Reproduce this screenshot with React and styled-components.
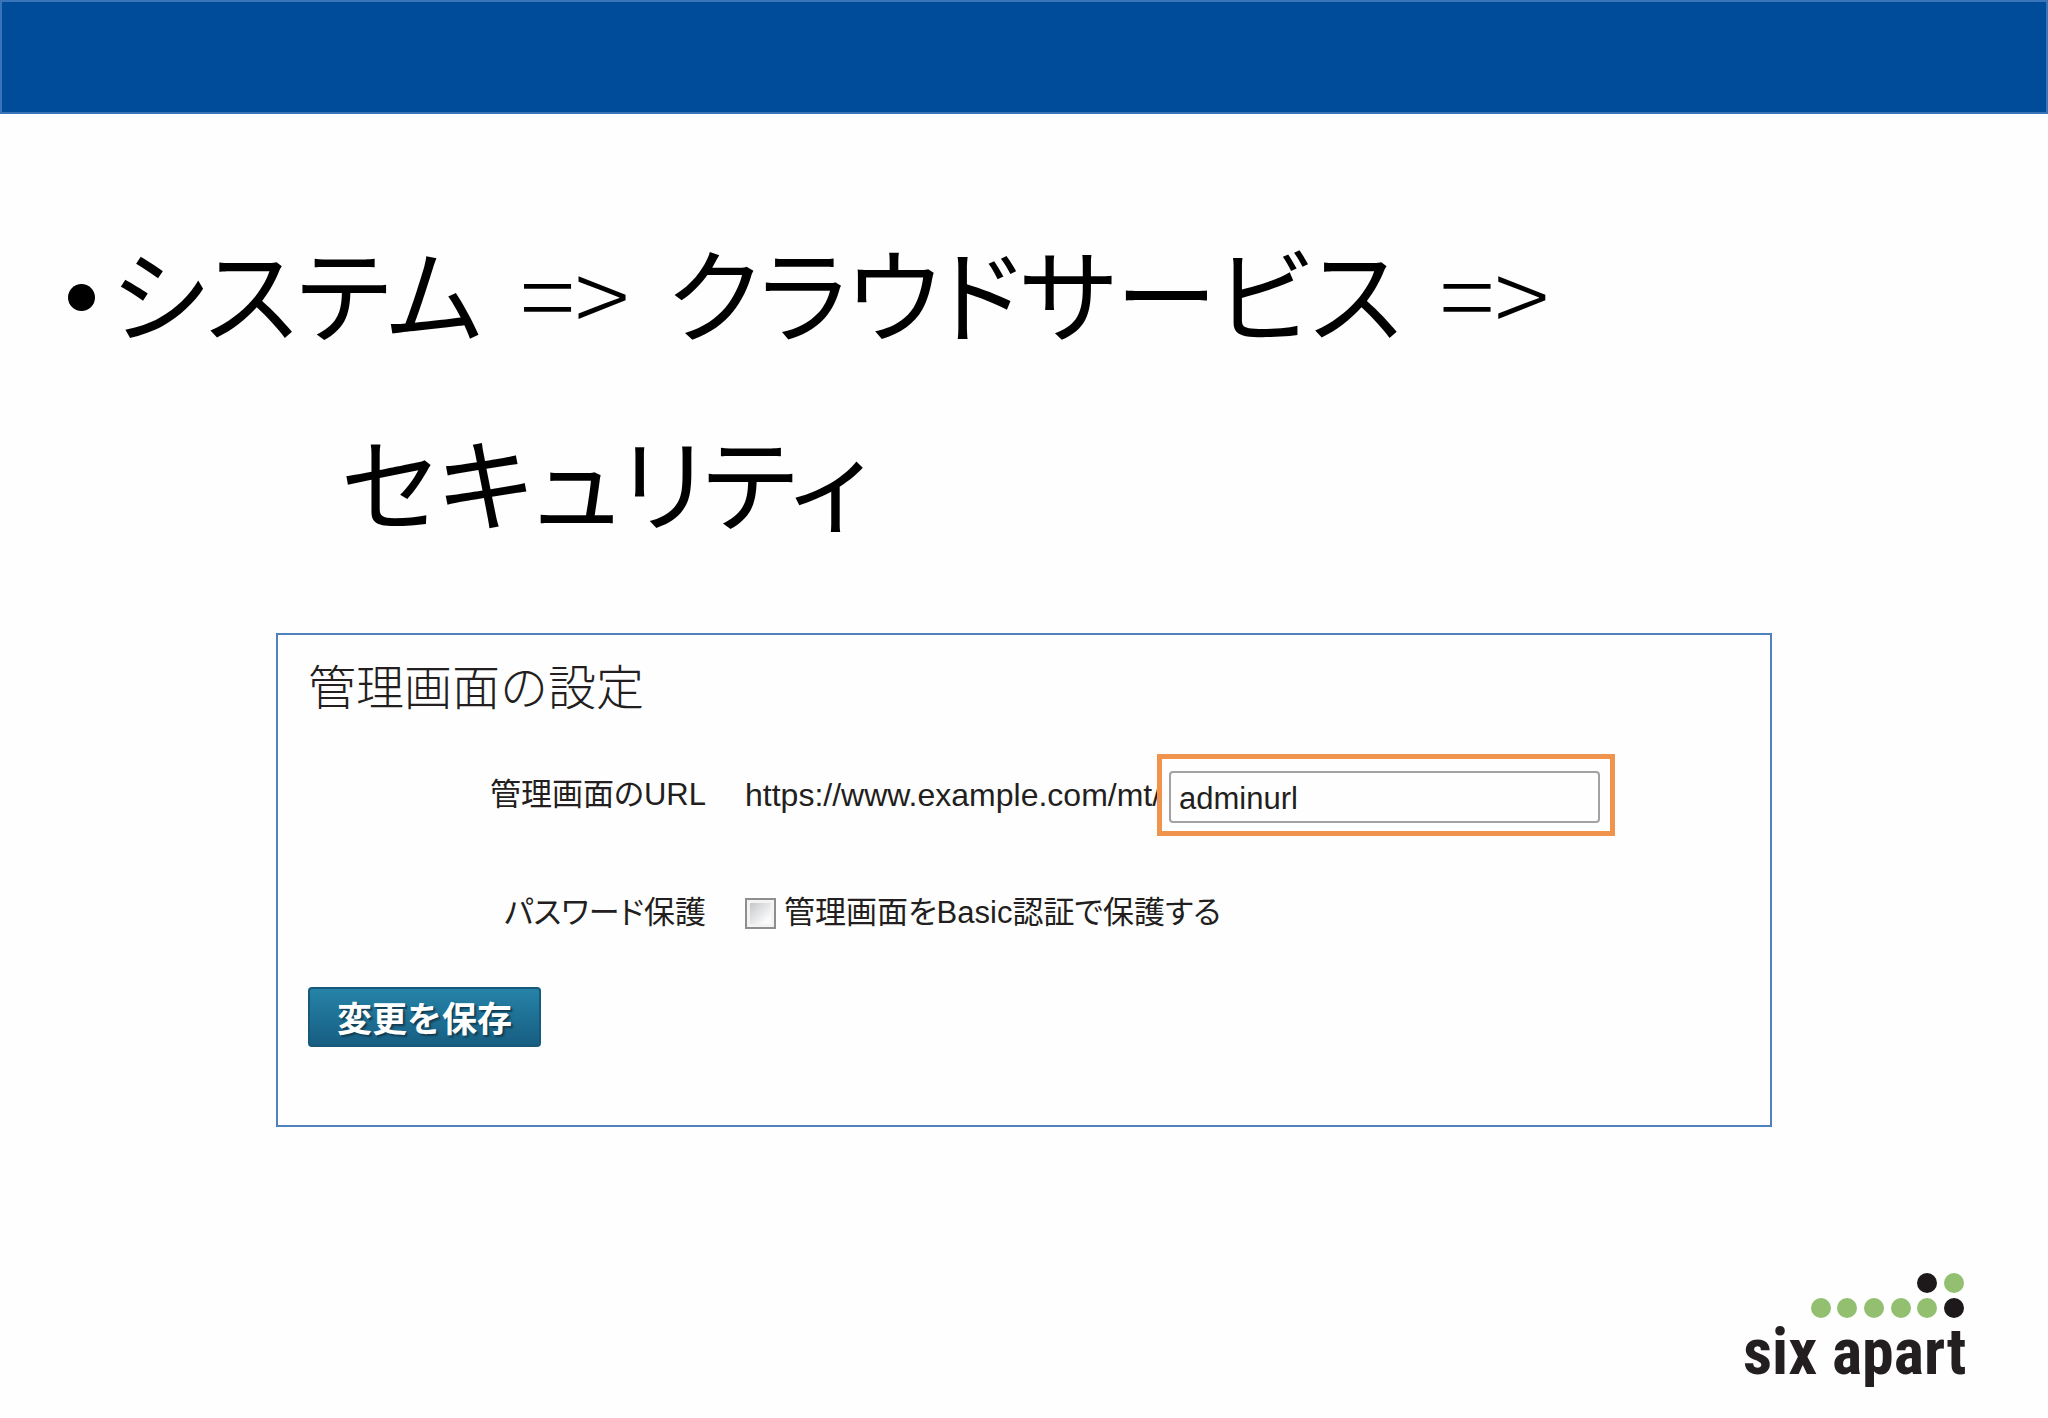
import React, { Fragment, useState } from "react";
import styled, { createGlobalStyle } from "styled-components";

const GlobalStyle = createGlobalStyle`
  * {
    box-sizing: border-box;
  }

  body {
    margin: 0;
    background: #fefefe;
    color: #231f20;
    font-family: "Liberation Sans", "Noto Sans CJK JP", sans-serif;
  }
`;

const Slide = styled.div`
  display: flex;
  flex-direction: column;
  min-height: 100vh;
`;

const TopBar = styled.header`
  height: 114px;
  background: #004c9b;
  border: 2px solid #3a74b8;
`;

const Main = styled.main`
  flex: 1;
  padding: 82px 276px 0;
`;

const Heading = styled.h1`
  margin: 0 -208px 59px;
  color: #000;
  font-family: "Noto Sans CJK JP", sans-serif;
  font-size: 102px;
  font-weight: 400;
  font-feature-settings: "palt";
  line-height: 189px;
`;

const HeadingLine = styled.span`
  display: flex;
  align-items: center;
  gap: 38px;
  padding-left: ${({ $indent }) => ($indent ? "273px" : "0")};
  white-space: nowrap;
`;

const Bullet = styled.span`
  width: 27px;
  height: 27px;
  margin: 14px -22px 0 0;
  border-radius: 50%;
  background: #000;
`;

const Arrow = styled.span`
  font-weight: 300;
`;

const Panel = styled.form`
  padding: 19px 30px 78px;
  border: 2px solid #4f81bd;
`;

const PanelTitle = styled.h2`
  margin: 0 0 40px;
  font-family: "Noto Sans CJK JP", sans-serif;
  font-size: 48px;
  font-weight: 300;
  line-height: 60px;
`;

const Row = styled.div`
  display: grid;
  grid-template-columns: 398px 1fr;
  align-items: center;
  column-gap: 39px;
  margin-bottom: ${({ $last }) => ($last ? "50px" : "53px")};
  font-size: 31px;
  font-feature-settings: "palt";
  line-height: 48px;
`;

const RowLabel = styled.label`
  text-align: right;
`;

const Field = styled.div`
  display: flex;
  align-items: center;
  white-space: nowrap;
`;

const UrlPrefix = styled.span`
  width: 412px;
  font-size: 32px;
`;

const Highlight = styled.span`
  display: flex;
  padding: 12px 10px 8px 7px;
  border: 5px solid #f0944d;
  background: #fefefe;
  z-index: 1;
`;

const TextInput = styled.input`
  width: 431px;
  height: 52px;
  padding: 3px 8px 0;
  border: 2px solid #a3a1a2;
  border-radius: 4px;
  background: #fefefe;
  color: #231f20;
  font-family: inherit;
  font-size: 31px;
`;

const CheckLabel = styled.label`
  display: flex;
  align-items: center;
  gap: 8px;
`;

const CheckBox = styled.input`
  appearance: none;
  width: 31px;
  height: 31px;
  margin: 0;
  border: 2px solid #8e8e8f;
  background: linear-gradient(135deg, #c4c7ca, #fafafa 80%) content-box, #f3f3f3;
  padding: 3px;

  &:checked {
    background: #1f7099 content-box;
  }
`;

const SaveButton = styled.button`
  display: block;
  height: 60px;
  padding: 0 27px;
  border: 2px solid #17597a;
  border-radius: 4px;
  background: linear-gradient(#2683a8, #175e82);
  color: #fff;
  font-family: "Noto Sans CJK JP", sans-serif;
  font-size: 35px;
  font-weight: 700;
  line-height: 52px;
  text-shadow: 2px 2px 2px #123c52;
`;

const Footer = styled.footer`
  display: flex;
  justify-content: flex-end;
  padding: 0 72px 24px;
`;

const LogoBox = styled.svg`
  width: 232px;
  height: 124px;
`;

const LogoText = styled.text`
  fill: #231f20;
  font-family: "Roboto Condensed", "Liberation Sans Narrow", "Liberation Sans", sans-serif;
  font-size: 64px;
  font-weight: 700;
`;

const greenDots = [
  [210, 13],
  [77, 38],
  [103, 38],
  [130, 38],
  [157, 38],
  [183, 38],
];

const blackDots = [
  [183, 13],
  [210, 38],
];

const Logo = () => (
  <LogoBox viewBox="0 0 232 124" role="img" aria-label="six apart">
    {greenDots.map(([x, y]) => (
      <circle key={`${x}-${y}`} cx={x} cy={y} r="10" fill="#92c070" />
    ))}
    {blackDots.map(([x, y]) => (
      <circle key={`${x}-${y}`} cx={x} cy={y} r="10" fill="#1d191b" />
    ))}
    <LogoText x="-1" y="104">
      six apart
    </LogoText>
  </LogoBox>
);

const App = () => {
  const [adminUrl, setAdminUrl] = useState("adminurl");
  const [isProtected, setIsProtected] = useState(false);

  return (
    <Fragment>
      <GlobalStyle />
      <Slide>
        <TopBar />
        <Main>
          <Heading>
            <HeadingLine>
              <Bullet />
              <span>システム</span>
              <Arrow>{"=>"}</Arrow>
              <span>クラウドサービス</span>
              <Arrow>{"=>"}</Arrow>
            </HeadingLine>
            <HeadingLine $indent>セキュリティ</HeadingLine>
          </Heading>
          <Panel onSubmit={(e) => e.preventDefault()}>
            <PanelTitle>管理画面の設定</PanelTitle>
            <Row>
              <RowLabel htmlFor="admin-url">管理画面のURL</RowLabel>
              <Field>
                <UrlPrefix>https://www.example.com/mt/</UrlPrefix>
                <Highlight>
                  <TextInput
                    id="admin-url"
                    type="text"
                    value={adminUrl}
                    onChange={(e) => setAdminUrl(e.target.value)}
                  />
                </Highlight>
              </Field>
            </Row>
            <Row $last>
              <RowLabel htmlFor="basic-auth">パスワード保護</RowLabel>
              <CheckLabel>
                <CheckBox
                  id="basic-auth"
                  type="checkbox"
                  checked={isProtected}
                  onChange={(e) => setIsProtected(e.target.checked)}
                />
                管理画面をBasic認証で保護する
              </CheckLabel>
            </Row>
            <SaveButton type="submit">変更を保存</SaveButton>
          </Panel>
        </Main>
        <Footer>
          <Logo />
        </Footer>
      </Slide>
    </Fragment>
  );
};

export default App;
